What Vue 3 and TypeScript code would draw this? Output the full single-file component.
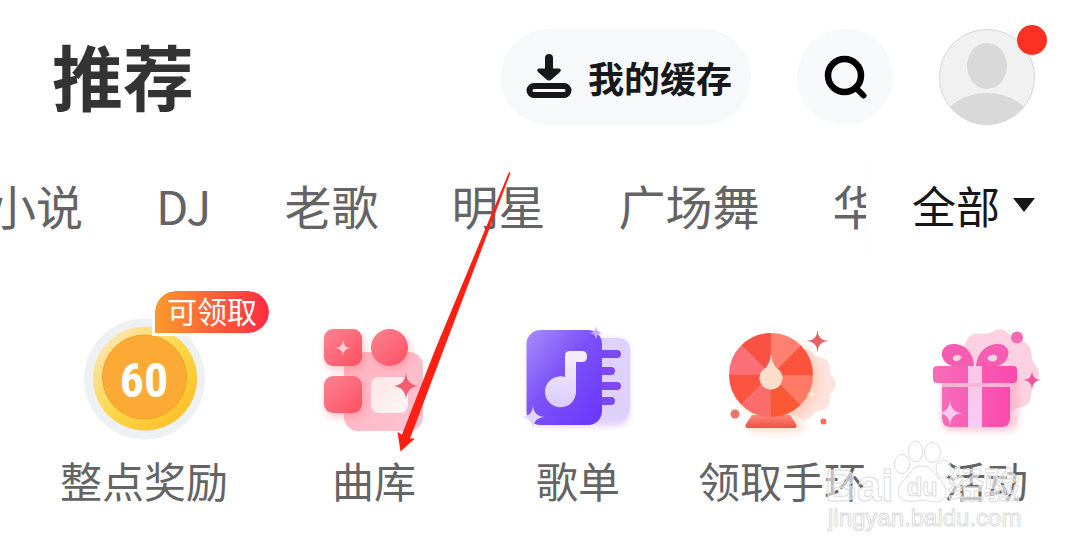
<script setup lang="ts">
import { ref } from 'vue'

interface Entry {
  id: string
  label: string
  view: string
}

const tabs: string[] = ['小说', 'DJ', '老歌', '明星', '广场舞', '华语']
const activeTab = ref<string>('')

const entries: Entry[] = [
  { id: 'reward', label: '整点奖励', view: '60 290 168 160' },
  { id: 'library', label: '曲库', view: '290 290 168 160' },
  { id: 'playlist', label: '歌单', view: '494 290 168 160' },
  { id: 'wheel', label: '领取手环', view: '698 290 168 160' },
  { id: 'gift', label: '活动', view: '902 290 168 160' },
]

const star = (x: number, y: number, r: number): string => {
  const k = r * 0.04
  return `M${x} ${y - r}Q${x + k} ${y - k} ${x + r} ${y}Q${x + k} ${y + k} ${x} ${y + r}Q${x - k} ${y + k} ${x - r} ${y}Q${x - k} ${y - k} ${x} ${y - r}Z`
}

const sectorColors: string[] = ['#ff8071', '#fb543c', '#ff7a66', '#fb5934', '#fd6c6c', '#fb533f', '#fd7078', '#f85042']
const sectors = sectorColors.map((fill, i) => {
  const a = (i * Math.PI) / 4
  const b = ((i + 1) * Math.PI) / 4
  const at = (t: number) => `${(771 + 42 * Math.sin(t)).toFixed(2)} ${(375 - 42 * Math.cos(t)).toFixed(2)}`
  return { fill, d: `M771 375L${at(a)}A42 42 0 0 1 ${at(b)}Z` }
})

const scallop = (cx: number, cy: number, r: number, n: number, wave: number): string => {
  const pts: string[] = []
  for (let i = 0; i < 120; i++) {
    const t = (i / 120) * Math.PI * 2
    const q = r + wave * Math.cos(n * t)
    pts.push(`${(cx + q * Math.cos(t)).toFixed(1)} ${(cy + q * Math.sin(t)).toFixed(1)}`)
  }
  return `M${pts.join('L')}Z`
}
</script>

<template>
  <main class="page">
    <header class="top">
      <h1 class="title">推荐</h1>
      <button class="cache" type="button">
        <svg class="cache-icon" viewBox="0 0 46 46" aria-hidden="true">
          <path d="M23 4V18" stroke="#17181a" stroke-width="8" stroke-linecap="round" />
          <path d="M13 14.500H33Q36 15 34 18L25.500 25.500Q23 27.500 20.500 25.500L12 18Q10 15 13 14.500Z" fill="#17181a" />
          <rect x="3.500" y="32" width="39" height="9" rx="4.500" fill="#fff" stroke="#17151c" stroke-width="6" />
        </svg>
        <span>我的缓存</span>
      </button>
      <button class="search" type="button" aria-label="搜索">
        <svg viewBox="0 0 96 96" aria-hidden="true">
          <circle cx="47.500" cy="46.500" r="16.500" fill="none" stroke="#000" stroke-width="6.500" />
          <path d="M59.500 59.500L66.500 66.500" stroke="#000" stroke-width="6" stroke-linecap="round" />
        </svg>
      </button>
      <button class="avatar" type="button" aria-label="我的">
        <svg viewBox="0 0 96 96" aria-hidden="true">
          <defs><clipPath id="face"><circle cx="48" cy="48" r="47.500" /></clipPath></defs>
          <circle cx="48" cy="48" r="47.500" fill="#f1f1f1" />
          <ellipse cx="48" cy="37" rx="20" ry="23" fill="#d9d9d9" />
          <ellipse cx="48" cy="93" rx="43" ry="29" fill="#d9d9d9" clip-path="url(#face)" />
          <circle cx="48" cy="48" r="47.500" fill="none" stroke="#d6d6d6" />
        </svg>
        <i class="dot"></i>
      </button>
    </header>

    <nav class="tabs">
      <div class="track">
        <button v-for="t in tabs" :key="t" class="tab" type="button" @click="activeTab = t">{{ t }}</button>
      </div>
      <button class="all" type="button">
        <span>全部</span>
        <svg class="caret" viewBox="0 0 22 14" aria-hidden="true"><path d="M0 0H22L11 14Z" fill="#161616" /></svg>
      </button>
    </nav>

    <section class="entries">
      <a v-for="e in entries" :key="e.id" class="entry" :class="e.id" href="#">
        <span class="figure">
          <svg class="art" :viewBox="e.view" aria-hidden="true">
            <template v-if="e.id === 'reward'">
              <defs>
                <linearGradient id="coin" x1="0" y1="0" x2="1" y2="1">
                  <stop offset="0.100" stop-color="#fde6b0" />
                  <stop offset="0.500" stop-color="#fdd84c" />
                  <stop offset="0.900" stop-color="#fbbf25" />
                </linearGradient>
              </defs>
              <circle cx="144.500" cy="379" r="60.500" fill="#eef1f3" />
              <circle cx="145" cy="378.500" r="52" fill="url(#coin)" />
              <circle cx="144.500" cy="377" r="42" fill="#fbab35" stroke="#f3a029" />
              <text class="coin-text" x="144" y="397" text-anchor="middle">60</text>
            </template>

            <template v-else-if="e.id === 'library'">
              <defs>
                <linearGradient id="rose" x1="0" y1="0" x2="1" y2="1">
                  <stop offset="0" stop-color="#fb8492" /><stop offset="1" stop-color="#fd4f61" />
                </linearGradient>
                <linearGradient id="blush" x1="0" y1="0" x2="1" y2="1">
                  <stop offset="0" stop-color="#ffb3bd" /><stop offset="1" stop-color="#fcc3d3" />
                </linearGradient>
                <linearGradient id="milk" x1="0" y1="0" x2="1" y2="1">
                  <stop offset="0" stop-color="#ffe4e6" /><stop offset="1" stop-color="#fff7f7" />
                </linearGradient>
                <filter id="roseGlow" x="-30%" y="-30%" width="160%" height="160%"><feGaussianBlur stdDeviation="4" /></filter>
              </defs>
              <rect x="344" y="352" width="79" height="79" rx="14" fill="url(#blush)" />
              <g filter="url(#roseGlow)" fill="#fd7787" opacity="0.450">
                <rect x="326" y="333" width="38" height="37" rx="9" /><circle cx="392" cy="351" r="18" />
                <rect x="326" y="380" width="38" height="37" rx="9" />
              </g>
              <rect x="324" y="329" width="38" height="37" rx="9" fill="url(#rose)" />
              <circle cx="389.500" cy="347.500" r="18.500" fill="url(#rose)" />
              <rect x="324" y="376" width="38" height="37" rx="9" fill="url(#rose)" />
              <rect x="371" y="377" width="37" height="36" rx="8" fill="url(#milk)" />
              <path :d="star(343, 348, 8)" fill="#ffd0d0" />
              <path :d="star(406, 386, 14)" fill="#f25e70" />
            </template>

            <template v-else-if="e.id === 'playlist'">
              <defs>
                <linearGradient id="violet" x1="0" y1="0" x2="1" y2="1">
                  <stop offset="0" stop-color="#a78dfb" /><stop offset="0.450" stop-color="#7c52f8" /><stop offset="1" stop-color="#6a35fb" />
                </linearGradient>
                <linearGradient id="note" x1="0" y1="0" x2="0" y2="1">
                  <stop offset="0" stop-color="#f7f0ff" /><stop offset="1" stop-color="#dccbfd" />
                </linearGradient>
                <filter id="violetGlow" x="-30%" y="-30%" width="160%" height="160%"><feGaussianBlur stdDeviation="3" /></filter>
              </defs>
              <rect x="530" y="339" width="99" height="87" rx="12" fill="#d5b9ff" filter="url(#violetGlow)" opacity="0.700" />
              <rect x="570" y="338" width="60" height="82" rx="11" fill="#ded2fc" />
              <path d="M598 354H617M598 371H611M598 386H617M598 401H611" stroke="#7b48f3" stroke-width="8" stroke-linecap="round" />
              <rect x="526.500" y="330" width="75.500" height="95" rx="14" fill="url(#violet)" />
              <path d="M565 377V356Q565 351 570 351H582Q587 351 587 356.500Q587 362 582 362H576V392A15.500 15.500 0 1 1 565 377Z" fill="url(#note)" />
              <path :d="star(533, 417, 12)" fill="#e1d3ff" />
              <path :d="star(596, 333, 7)" fill="#c6abfd" />
            </template>

            <template v-else-if="e.id === 'wheel'">
              <defs>
                <linearGradient id="stand" x1="0" y1="0" x2="0" y2="1">
                  <stop offset="0" stop-color="#ff8778" /><stop offset="1" stop-color="#ee5047" />
                </linearGradient>
                <filter id="wheelGlow" x="-30%" y="-30%" width="160%" height="160%"><feGaussianBlur stdDeviation="4" /></filter>
              </defs>
              <path :d="scallop(800, 384, 34, 9, 2)" fill="#fde3df" />
              <g filter="url(#wheelGlow)" opacity="0.400" fill="#ffae86">
                <circle cx="777" cy="380" r="42" /><rect x="748" y="420" width="56" height="12" rx="5" />
              </g>
              <path d="M752 415H790L796 424Q798 428 793 428H749Q744 428 746 424Z" fill="url(#stand)" />
              <path v-for="s in sectors" :key="s.d" :d="s.d" :fill="s.fill" />
              <path d="M771 353Q772 363 776.500 368A11.500 11.500 0 1 1 765.500 368Q770 363 771 353Z" fill="#fcdcca" />
              <path :d="star(817.500, 341, 11)" fill="#e85f63" />
              <path :d="star(812, 394, 6)" fill="#ffe9cf" />
              <circle cx="735" cy="414" r="4.500" fill="#ef7469" /><circle cx="823.500" cy="421.500" r="3" fill="#ed7160" />
            </template>

            <template v-else>
              <defs>
                <linearGradient id="pink" x1="0" y1="0" x2="1" y2="0">
                  <stop offset="0" stop-color="#f76cb9" /><stop offset="1" stop-color="#fa49ad" />
                </linearGradient>
                <linearGradient id="ribbon" x1="0" y1="0" x2="0" y2="1">
                  <stop offset="0" stop-color="#ffc5e5" /><stop offset="1" stop-color="#f6cdf4" />
                </linearGradient>
                <filter id="pinkGlow" x="-30%" y="-30%" width="160%" height="160%"><feGaussianBlur stdDeviation="3" /></filter>
              </defs>
              <path :d="scallop(994, 374, 43, 9, 2)" fill="#fdd1e2" />
              <rect x="942" y="372" width="76" height="59" rx="9" fill="#fda8bb" filter="url(#pinkGlow)" opacity="0.600" />
              <path fill-rule="evenodd" d="M974 367C974 353 965 344 954 344C945 344 941 350 942 356C944 363 950 367 960 367ZM953 357Q957 353 962 357Q959 362 955 361Q952 359 953 357Z" fill="#f45db1" />
              <path fill-rule="evenodd" d="M976 367C977 353 986 344 998 344C1006 344 1010 350 1008 356C1006 363 1000 367 990 367ZM997 356Q992 352 987 358Q990 363 995 361Q998 359 997 356Z" fill="#f45db1" />
              <rect x="933" y="366" width="84" height="17" rx="4" fill="url(#pink)" />
              <path d="M942 387H1010V418Q1010 427 1001 427H951Q942 427 942 418Z" fill="url(#pink)" />
              <rect x="942" y="383" width="68" height="4" fill="#fbb4d6" />
              <path d="M968 366H982V383H968ZM968 387H982V427H968Z" fill="url(#ribbon)" />
              <circle cx="1017" cy="337.500" r="6" fill="#f868b4" />
              <path :d="star(1032, 380, 9)" fill="#f0529c" />
              <path :d="star(950, 413, 13)" fill="#ffc8f1" />
            </template>
          </svg>
          <span v-if="e.id === 'reward'" class="badge">可领取</span>
        </span>
        <span class="label">{{ e.label }}</span>
      </a>
    </section>

    <svg class="overlay" viewBox="0 0 1080 556" aria-hidden="true">
      <g class="mark">
        <text class="mark-logo" x="825" y="501">Bai</text>
        <ellipse cx="902" cy="464" rx="7.500" ry="9.500" /><ellipse cx="915.500" cy="451.500" rx="7" ry="10.500" />
        <ellipse cx="932.500" cy="452.500" rx="8" ry="10" /><ellipse cx="943.500" cy="469" rx="7.500" ry="9" />
        <path d="M922 466C932 466 935 475 940 480C948 487 949 501 936 502C929 502 927 500 922 500C917 500 914 503 907 501C896 500 896 487 904 480C910 474 912 466 922 466Z" />
        <text class="mark-du" x="907" y="496">du</text>
        <text class="mark-cn" x="948" y="499">经验</text>
        <text class="mark-url" x="828" y="526">jingyan.baidu.com</text>
      </g>
      <path d="M509 172L510.500 173L443.500 350L410 438.500L415 438.500L400.500 451.500L397.500 432L402 434.500L435 350Z" fill="#ff2014" />
    </svg>
  </main>
</template>

<style>
body {
  margin: 0;
  background: #fff;
}
</style>

<style scoped>
.page {
  position: relative;
  min-height: 100vh;
  overflow: hidden;
  background: #fff;
  color: #646464;
  font-family: "Noto Sans CJK SC", sans-serif;
}
button {
  border: 0;
  padding: 0;
  background: none;
  color: inherit;
  font: inherit;
  cursor: pointer;
}
svg {
  display: block;
}
.top {
  display: flex;
  align-items: center;
  gap: 46px;
  height: 96px;
  padding: 29px 45px 0 52px;
}
.title {
  flex: 1;
  margin: 0;
  color: #333;
  font-size: 71px;
  line-height: 90px;
  padding-bottom: 6px;
  font-weight: 700;
}
.cache {
  display: flex;
  align-items: center;
  gap: 16px;
  height: 96px;
  padding: 0 19px 0 25px;
  border-radius: 48px;
  background: #f7f8fa;
  color: #17181a;
  font-size: 36px;
  line-height: 48px;
  font-weight: 700;
}
.cache-icon {
  width: 46px;
  height: 46px;
}
.search,
.avatar {
  position: relative;
  width: 96px;
  height: 96px;
  border-radius: 50%;
}
.search {
  background: #f8f9fb;
}
.dot {
  position: absolute;
  top: -4px;
  right: -12px;
  width: 30px;
  height: 30px;
  border-radius: 50%;
  background: #fd3024;
}
.tabs {
  display: flex;
  height: 96px;
  margin-top: 35px;
}
.track {
  flex: 1;
  min-width: 0;
  display: flex;
  align-items: flex-start;
  gap: 73px;
  overflow: hidden;
}
.tab {
  flex: none;
  font-size: 47px;
  line-height: 90px;
  white-space: nowrap;
}
.tab:first-child {
  margin-left: -11px;
}
.all {
  display: flex;
  align-items: center;
  align-self: flex-start;
  gap: 13px;
  height: 96px;
  padding: 0 45px 6px;
  border-left: 1px solid #fafafa;
  color: #161616;
  font-size: 44px;
  line-height: 90px;
}
.caret {
  width: 22px;
  height: 14px;
}
.entries {
  display: flex;
  gap: 36px;
  padding: 34px 10px 0 60px;
}
.entry {
  flex: 1;
  display: flex;
  flex-direction: column;
  align-items: center;
  color: #646464;
  text-decoration: none;
}
.reward {
  margin-right: 26px;
}
.figure {
  position: relative;
}
.art {
  width: 168px;
  height: 160px;
}
.coin-text {
  fill: #fff;
  font: 700 48px "Roboto Condensed", Roboto, sans-serif;
}
.badge {
  position: absolute;
  top: -2px;
  left: 92px;
  box-sizing: border-box;
  padding: 0 12px 4px;
  border: 3px solid #fff;
  border-radius: 24px 24px 24px 0;
  background: linear-gradient(90deg, #fb9a2c, #ff2b43);
  background-clip: padding-box;
  color: #fff;
  font-size: 30px;
  line-height: 38px;
  white-space: nowrap;
}
.label {
  font-size: 42px;
  line-height: 60px;
  white-space: nowrap;
}
.overlay {
  position: absolute;
  top: 0;
  left: 0;
  width: 100%;
  pointer-events: none;
}
.mark {
  fill: #fff;
  fill-opacity: 0.6;
  stroke: #dcdcdc;
  stroke-width: 1;
}
.mark-logo {
  font: 700 44px "Liberation Sans", sans-serif;
}
.mark-du {
  font: 700 25px "Liberation Sans", sans-serif;
}
.mark-cn {
  font: 700 36px "Noto Sans CJK SC", sans-serif;
}
.mark-url {
  font: 400 24px "Liberation Sans", sans-serif;
}
</style>
